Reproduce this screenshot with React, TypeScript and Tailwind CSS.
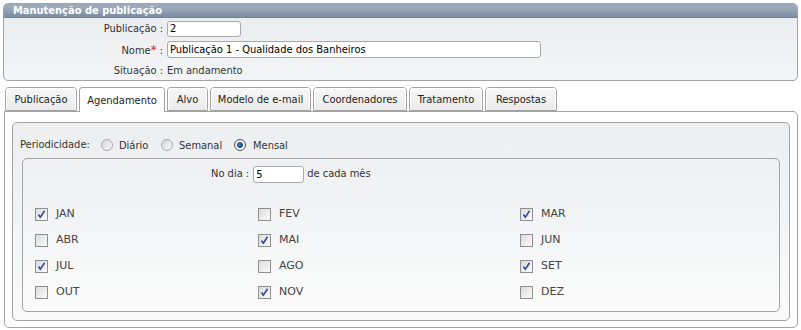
import React from "react";

const font = "font-['Tahoma','DejaVu_Sans_Condensed','DejaVu_Sans',sans-serif]";

function Checkbox({ checked }: { checked: boolean }) {
  return (
    <span className="relative inline-block w-[13px] h-[13px] border border-[#8f8f8f] bg-gradient-to-br from-[#dcdcdc] to-[#fbfbfb] shrink-0">
      {checked && (
        <svg viewBox="0 0 11 11" className="absolute inset-0 w-[11px] h-[11px]">
          <path d="M2.5 5.5 L4.3 8.3 L8.6 1.8" fill="none" stroke="#3b4d94" strokeWidth="1.6" strokeLinejoin="round" />
        </svg>
      )}
    </span>
  );
}

function Radio({ checked }: { checked: boolean }) {
  return (
    <span
      className={`inline-flex items-center justify-center w-[12px] h-[12px] rounded-full border ${
        checked ? "border-[#4b5560] bg-gradient-to-br from-[#e8e8e8] to-[#ffffff]" : "border-[#a9a9a9] bg-gradient-to-br from-[#d4d4d4] to-[#fafafa]"
      } shrink-0`}
    >
      {checked && <span className="w-[6px] h-[6px] rounded-full bg-gradient-to-br from-[#3fa3e0] to-[#0a4a8c] border border-[#0c3a66]" />}
    </span>
  );
}

const tabs: [string, string][] = [
  ["Publicação", "w-[72px]"],
  ["Agendamento", "w-[86px]"],
  ["Alvo", "w-[41px]"],
  ["Modelo de e-mail", "w-[101px]"],
  ["Coordenadores", "w-[94px]"],
  ["Tratamento", "w-[74px]"],
  ["Respostas", "w-[72px]"],
];

const months: [string, boolean][] = [
  ["JAN", true], ["FEV", false], ["MAR", true],
  ["ABR", false], ["MAI", true], ["JUN", false],
  ["JUL", true], ["AGO", false], ["SET", true],
  ["OUT", false], ["NOV", true], ["DEZ", false],
];

export default function App() {
  return (
    <div className={`w-[801px] h-[330px] bg-white text-[11px] text-[#333] ${font} pt-[3px] px-[3px]`}>
      {/* Top panel */}
      <div className="w-[795px] h-[78px] rounded-[5px] border border-[#a3a3a3] bg-gradient-to-b from-[#e8ebee] to-[#f4f5f6] overflow-hidden">
        <div className="h-[14px] bg-gradient-to-b from-[#9eadbd] via-[#93a3b4] to-[#7a8ca1] text-white font-bold leading-[13px] pl-[9px] border-b border-[#72849a]">
          Manutenção de publicação
        </div>
        <div className="grid grid-cols-[159px_1fr] gap-x-[4px] items-center pt-[3px]">
          <div className="text-right h-[16px] leading-[16px]">Publicação :</div>
          <div>
            <div className="w-[74px] h-[16px] border border-[#a9a9a9] rounded-[3px] bg-white leading-[14px] pl-[2px] text-black">2</div>
          </div>
          <div className="text-right mt-[4px] h-[17px] leading-[17px]">
            Nome<span className="text-[#e0182d] text-[13px]">*</span> :
          </div>
          <div className="mt-[4px]">
            <div className="w-[374px] h-[17px] border border-[#a9a9a9] rounded-[3px] bg-white leading-[15px] pl-[2px] text-black">
              Publicação 1 - Qualidade dos Banheiros
            </div>
          </div>
          <div className="text-right mt-[5px] leading-[16px]">Situação :</div>
          <div className="mt-[5px] leading-[16px]">Em andamento</div>
        </div>
      </div>

      {/* Tabs */}
      <div className="flex gap-[2px] mt-[6px] pl-[2px] h-[24px] items-end relative z-10">
        {tabs.map(([t, w]) => {
          const active = t === "Agendamento";
          return (
            <div
              key={t}
              className={`${w} text-center rounded-t-[4px] border border-[#a3a3a3] text-[#222] ${
                active ? "h-[25px] bg-white border-b-0 leading-[23px] -mb-[1px]" : "h-[24px] bg-gradient-to-b from-[#f7f7f7] to-[#ebebeb] leading-[22px]"
              }`}
            >
              <div className="h-full rounded-t-[3px] border-x border-t border-white whitespace-nowrap">{t}</div>
            </div>
          );
        })}
      </div>

      {/* Tab panel */}
      <div className="w-[794px] ml-[1px] h-[217px] border border-[#a3a3a3] rounded-b-[5px] rounded-tr-[5px] bg-white px-[7px] pt-[10px]">
        <div className="h-[199px] border border-[#a3a3a3] rounded-[5px] bg-gradient-to-b from-[#eceef0] to-[#fafafa] pl-[7px] pr-[9px] pt-[12px]">
          <div className="flex items-center h-[20px]">
            <span className="w-[81px]">Periodicidade:</span>
            <Radio checked={false} />
            <span className="ml-[6px] w-[42px] mt-[2px]">Diário</span>
            <Radio checked={false} />
            <span className="ml-[6px] w-[55px] mt-[2px]">Semanal</span>
            <Radio checked={true} />
            <span className="ml-[7px] mt-[2px]">Mensal</span>
          </div>
          <div className="mt-[3px] ml-[2px] h-[154px] border border-[#a3a3a3] rounded-[5px] bg-gradient-to-b from-[#eef0f2] to-[#fbfbfb] pl-[12px] pt-[7px]">
            <div className="flex items-center h-[17px] pl-[176px]">
              <span>No dia :</span>
              <div className="ml-[4px] w-[51px] h-[17px] border border-[#a9a9a9] rounded-[3px] bg-white leading-[15px] pl-[2px] text-black">5</div>
              <span className="ml-[3px]">de cada mês</span>
            </div>
            <div className="grid grid-cols-[223px_262px_1fr] mt-[25px] gap-y-[13px] text-[#444] font-['Verdana','DejaVu_Sans',sans-serif] text-[11px]">
              {months.map(([m, c]) => (
                <div key={m} className="flex items-center h-[13px]">
                  <Checkbox checked={c} />
                  <span className="ml-[8px]">{m}</span>
                </div>
              ))}
            </div>
          </div>
        </div>
      </div>
    </div>
  );
}
